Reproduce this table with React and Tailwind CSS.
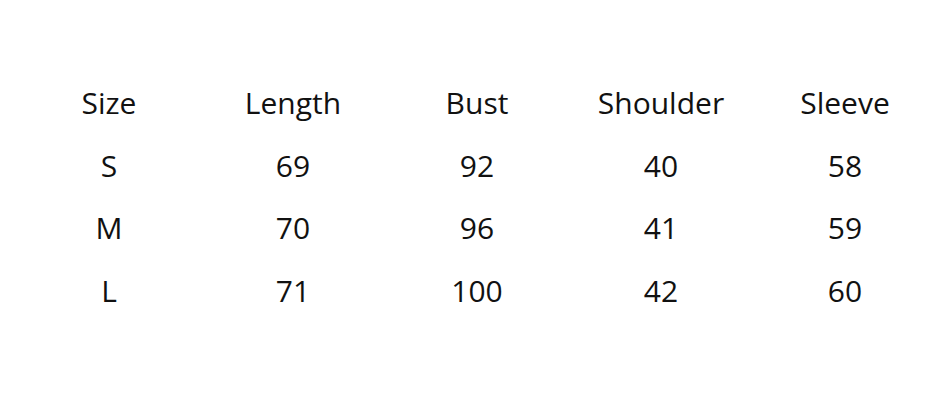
import React from "react";

const headers = ["Size", "Length", "Bust", "Shoulder", "Sleeve"];

const rows = [
  ["S", "69", "92", "40", "58"],
  ["M", "70", "96", "41", "59"],
  ["L", "71", "100", "42", "60"],
];

export default function App() {
  return (
    <div
      className="w-[950px] h-[400px] bg-white pt-[72px] pl-[17px] text-[30px] leading-[62.5px] text-[#111]"
      style={{ fontFamily: '"Open Sans", "Noto Sans", sans-serif' }}
    >
      <div className="grid grid-cols-[repeat(5,184px)]">
        {headers.map((h) => (
          <div key={h} className="text-center">{h}</div>
        ))}
        {rows.map((row) =>
          row.map((cell, i) => (
            <div key={row[0] + i} className="text-center">{cell}</div>
          ))
        )}
      </div>
    </div>
  );
}
